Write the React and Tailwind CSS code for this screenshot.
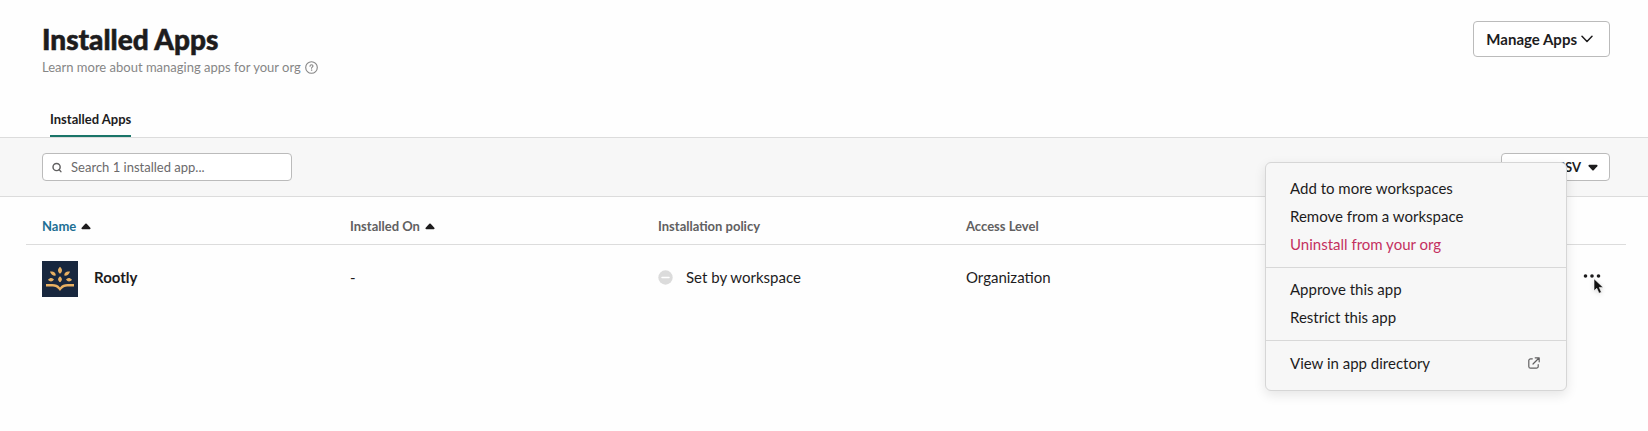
import React from "react";

function Chevron() {
  return (
    <svg width="12" height="8" viewBox="0 0 12 8" fill="none" stroke="currentColor" strokeWidth="1.5" strokeLinecap="round" strokeLinejoin="round" aria-hidden="true">
      <path d="M1 1.2 6 6.4 11 1.2" />
    </svg>
  );
}

function Caret({ down = false }) {
  return (
    <svg width="10" height="7" viewBox="0 0 10 7" fill="#1d1c1d" className={down ? "rotate-180" : ""} aria-hidden="true">
      <path d="M4.3.8a1 1 0 0 1 1.4 0l3.6 4c.5.6.2 1.4-.6 1.4H1.300C.5 6.200.2 5.400.7 4.800z" />
    </svg>
  );
}

function HelpIcon() {
  return (
    <svg width="13" height="13" viewBox="0 0 13 13" fill="none" stroke="currentColor" strokeLinecap="round" strokeLinejoin="round" aria-hidden="true">
      <circle cx="6.500" cy="6.500" r="5.800" strokeWidth="1.100" />
      <path d="M5 5.200c0-1 .7-1.500 1.500-1.500S8 4.200 8 5c0 1.100-1.500 1.100-1.500 2.300" strokeWidth="1.100" />
      <circle cx="6.500" cy="9.100" r=".3" fill="currentColor" strokeWidth=".6" />
    </svg>
  );
}

function SearchIcon() {
  return (
    <svg width="11" height="11" viewBox="0 0 11 11" fill="none" stroke="currentColor" strokeWidth="1.600" strokeLinecap="round" aria-hidden="true">
      <circle cx="5" cy="5" r="3.900" />
      <path d="M7.800 7.800 9.700 10" />
    </svg>
  );
}

function ExternalIcon() {
  return (
    <svg width="12" height="12" viewBox="0 0 12 12" fill="none" stroke="#616061" strokeWidth="1.200" strokeLinecap="round" strokeLinejoin="round" aria-hidden="true">
      <path d="M4.300 1.800H2.600a1.800 1.800 0 0 0-1.800 1.800v5.800a1.800 1.800 0 0 0 1.800 1.800h5.800a1.800 1.800 0 0 0 1.800-1.800V7.700" />
      <path d="M7.200.8h4v4M11 1 5 7" />
    </svg>
  );
}

function RootlyLogo() {
  return (
    <svg width="36" height="36" viewBox="0 0 36 36" fill="#e8b062" aria-hidden="true">
      <rect width="36" height="36" fill="#18273e" />
      <path d="M18 5.800c1.500 1.500 2 2.500 2 3.600s-.7 2.200-2 3.300c-1.300-1.100-2-2.200-2-3.300s.5-2.100 2-3.600z" />
      <path d="M18 15.300c1.500 1.500 1.900 2.300 1.900 3.100s-.7 1.900-1.900 2.900c-1.200-1-1.900-2.100-1.900-2.900s.4-1.600 1.900-3.100z" />
      <path d="M8 10.500c2.300-.2 3.600.2 4.500 1 .8.800 1.200 1.700 1.300 3.100-1.500.2-2.900-.1-3.800-.9S8.400 12 8 10.500z" />
      <path d="M28 10.500c-2.300-.2-3.600.2-4.500 1-.8.800-1.200 1.700-1.300 3.100 1.500.2 2.900-.1 3.800-.9s1.600-1.700 2-3.200z" />
      <path d="M6 18.800c1.200-1.400 2.300-2 3.400-1.900 1 .1 1.800.6 2.600 1.600-.9 1.200-1.900 1.900-3 1.900s-2.100-.5-3-1.600z" />
      <path d="M30 18.800c-1.200-1.400-2.300-2-3.400-1.900-1 .1-1.800.6-2.600 1.600.9 1.200 1.900 1.900 3 1.900s2.100-.5 3-1.600z" />
      <path d="M4 23h6.200c3.600 0 6 1 7.800 3.400C19.800 24 22.200 23 25.800 23H32v2.500h-5.500c-4 0-6.400 1.200-8.500 4.600-2.100-3.400-4.500-4.600-8.500-4.600H4z" />
    </svg>
  );
}

function MinusCircle() {
  return (
    <svg width="15" height="15" viewBox="0 0 15 15" aria-hidden="true">
      <circle cx="7.500" cy="7.500" r="7.200" fill="#dbdbdb" />
      <path d="M4 7.500h7" stroke="#fff" strokeWidth="1.500" strokeLinecap="round" />
    </svg>
  );
}

function Pointer() {
  return (
    <svg width="11" height="17" viewBox="0 0 11 17" className="pointer-events-none absolute top-[18px] left-[17px] drop-shadow-sm" aria-hidden="true">
      <path d="M1 .8v12l2.800-2.500 2.200 5 2.400-1-2.100-4.900h3.900z" fill="#111" stroke="#fff" strokeWidth=".6" />
    </svg>
  );
}

const menuGroups = [
  [{ label: "Add to more workspaces" }, { label: "Remove from a workspace" }, { label: "Uninstall from your org", danger: true }],
  [{ label: "Approve this app" }, { label: "Restrict this app" }],
  [{ label: "View in app directory", external: true }],
];

function AppMenu() {
  return (
    <div role="menu" className="absolute -top-[98px] right-[41px] z-10 w-[302px] divide-y divide-[#d8d8d8] rounded-md border border-[#d6d6d6] bg-[#f7f7f7] pt-1 pb-1 shadow-[0_4px_12px_rgba(0,0,0,0.1)]">
      {menuGroups.map((group, i) => (
        <div key={i} className="pt-[7px] pb-[9px] last:pt-2">
          {group.map((item) => (
            <button
              key={item.label}
              type="button"
              role="menuitem"
              className={`flex h-7 w-full items-center justify-between pr-[26px] pl-6 text-left ${item.danger ? "text-[#c4305f]" : ""}`}
            >
              {item.label}
              {item.external && <ExternalIcon />}
            </button>
          ))}
        </div>
      ))}
    </div>
  );
}

export default function App() {
  return (
    <main className="min-h-screen bg-[#fefefe] font-['Lato',sans-serif] text-[15px] text-[#1d1c1d]">
      <header className="flex items-start justify-between pt-[21px] pr-[38px] pl-[42px]">
        <div>
          <h1 className="text-[28px] leading-9 font-black [-webkit-text-stroke:0.02em_currentColor]">Installed Apps</h1>
          <a href="#learn" className="flex items-center gap-1 text-[13px] leading-5 text-[#868686]">
            Learn more about managing apps for your org
            <HelpIcon />
          </a>
        </div>
        <button type="button" className="flex h-9 items-center gap-1 rounded border border-[#bbb] bg-white pr-4 pl-3 font-bold">
          Manage Apps
          <Chevron />
        </button>
      </header>

      <nav className="mt-7 flex border-b border-[#dcdcdc] px-[50px]">
        <a href="#installed" aria-current="page" className="flex h-8 items-center border-b-2 border-[#1a7569] text-[13px] font-bold">
          Installed Apps
        </a>
      </nav>

      <section className="flex items-center justify-between border-b border-[#dcdcdc] bg-[#f7f7f7] py-[15px] pr-[38px] pl-[42px]">
        <label className="flex h-7 w-[250px] items-center gap-[9px] rounded border border-[#bbb] bg-white px-[9px] text-[#616061]">
          <SearchIcon />
          <input type="text" aria-label="Search installed apps" placeholder="Search 1 installed app..." className="w-full min-w-0 bg-transparent pt-0.5 text-[13px] outline-none placeholder:text-[#6b6a6b]" />
        </label>
        <button type="button" className="flex h-7 items-center gap-[7px] rounded border border-[#bbb] bg-white pt-px pr-[11px] pl-3 text-[13px] font-bold">
          Export CSV
          <Caret down />
        </button>
      </section>

      <div className="pr-[22px] pl-[26px]">
        <table className="w-full table-fixed border-collapse text-left">
          <thead>
            <tr className="h-[47px] border-b border-[#dcdcdc] text-[13px] text-[#616061]">
              <th className="w-[20.25%] pt-3 pl-4 font-bold">
                <button type="button" className="flex items-center gap-[5px] text-[#1d6f94]">Name <Caret /></button>
              </th>
              <th className="w-[19.25%] pt-3 font-bold">
                <button type="button" className="flex items-center gap-[5px]">Installed On <Caret /></button>
              </th>
              <th className="w-[19.25%] pt-3 font-bold">Installation policy</th>
              <th className="w-[19.25%] pt-3 font-bold">Access Level</th>
              <th aria-label="Actions" />
            </tr>
          </thead>
          <tbody>
            <tr className="h-[68px]">
              <td className="pt-0.5 pl-4">
                <div className="flex items-center gap-4 font-bold"><RootlyLogo /><span className="pb-1">Rootly</span></div>
              </td>
              <td className="pb-0.5">-</td>
              <td className="pb-0.5">
                <div className="flex items-center gap-[13px]"><MinusCircle />Set by workspace</div>
              </td>
              <td className="pb-0.5">Organization</td>
              <td className="pr-[18px] pb-1">
                <div className="relative ml-auto w-8">
                  <button type="button" aria-label="More actions" aria-haspopup="menu" aria-expanded="true" className="flex h-8 w-8 items-center justify-center">
                    <svg width="18" height="4" viewBox="0 0 18 4" fill="#1d1c1d" aria-hidden="true">
                      <circle cx="2.500" cy="2" r="1.800" />
                      <circle cx="9" cy="2" r="1.800" />
                      <circle cx="15.500" cy="2" r="1.800" />
                    </svg>
                  </button>
                  <Pointer />
                  <AppMenu />
                </div>
              </td>
            </tr>
          </tbody>
        </table>
      </div>
    </main>
  );
}
